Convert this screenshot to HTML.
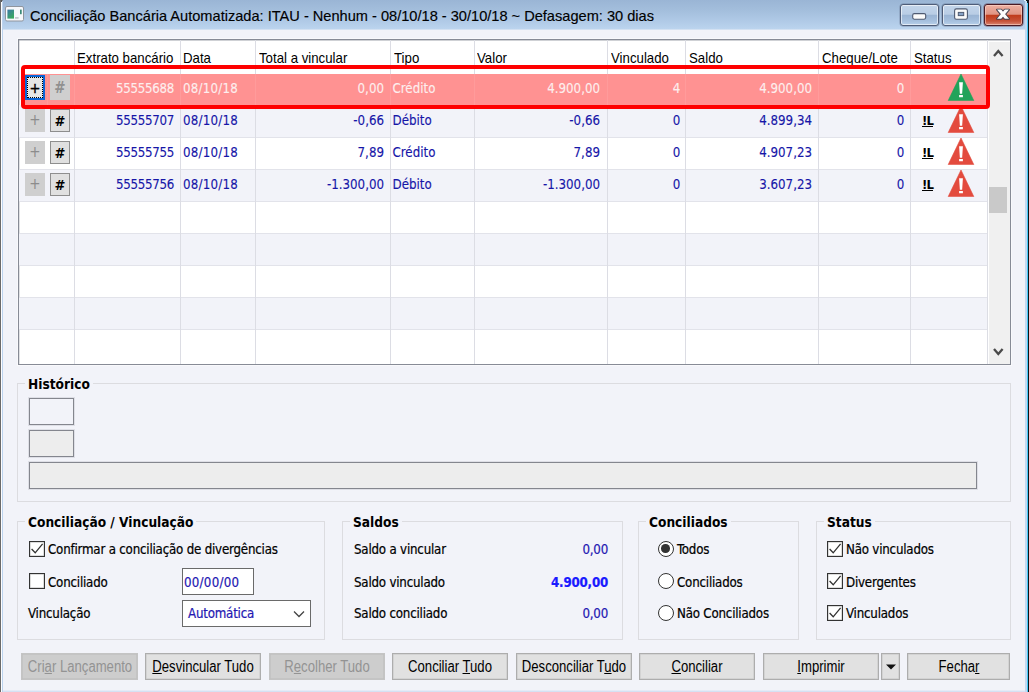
<!DOCTYPE html>
<html lang="pt-BR">
<head>
<meta charset="utf-8">
<title>Conciliação Bancária Automatizada</title>
<style>
*{box-sizing:border-box;margin:0;padding:0}
html,body{width:1029px;height:692px;overflow:hidden;background:#f2f3f9}
body{position:relative;font-family:"DejaVu Sans Condensed","Liberation Sans",sans-serif;font-size:13px;color:#000;line-height:16px}
.abs{position:absolute}
.t{position:absolute;white-space:nowrap;line-height:16px;height:16px;font-size:13.2px;letter-spacing:-0.2px;-webkit-text-stroke:0.2px currentColor}
/* window chrome */
#titlebar{left:0;top:0;width:1029px;height:29px;background:linear-gradient(#9ab5d5 0%,#a3bedc 35%,#afc9e6 70%,#bbd4ee 100%)}
#title{left:30px;top:6px;letter-spacing:0;-webkit-text-stroke:0.15px #000;font-family:"Liberation Sans",sans-serif;font-size:14.6px;line-height:20px;height:20px;color:#000}
.edgeL0{left:0;top:0;width:1px;height:692px;background:#6a6a6a}
.edgeL1{left:1px;top:0;width:1px;height:692px;background:#fdfdff}
.edgeL2{left:2px;top:0;width:1px;height:692px;background:#bcd3ee}
.edgeR0{left:1028px;top:0;width:1px;height:692px;background:#0a1418}
.edgeR1{left:1027px;top:0;width:1px;height:692px;background:#45c9f7}
.edgeR2{left:1025px;top:0;width:2px;height:692px;background:#c4d8f0}
.edgeB{left:2px;top:690px;width:1025px;height:2px;background:linear-gradient(#ecf0f9,#cddcf1)}
/* caption buttons */
.cap{position:absolute;top:4px;height:22px;border:1px solid #4f5d78;border-radius:3px;box-shadow:inset 0 0 0 1px rgba(255,255,255,.6),0 0 0 0.5px rgba(79,93,120,.5)}
.cap.mn,.cap.mx{background:linear-gradient(#c3d5ea 0%,#b9cde5 46%,#9bb5d4 52%,#a6c0de 80%,#b8d0ea 100%)}
.cap.cl{border-color:#4a1a24;box-shadow:inset 0 0 0 1px rgba(255,220,210,.55),0 0 0 0.5px rgba(74,26,36,.6);background:linear-gradient(#eeb0a2 0%,#e09584 46%,#c03c1c 52%,#c65238 80%,#d98672 100%)}
/* grid */
#grid{left:18px;top:39px;width:993px;height:326px;background:#fff;border:1px solid #878b96;box-shadow:inset 0 1px 0 rgba(135,139,150,.4),inset 1px 0 0 rgba(135,139,150,.25),0 0 0 1px rgba(255,255,255,.5)}
.row{position:absolute;left:0;width:969px;height:32px}
.lav{background:#f2f3f9}
.hl{position:absolute;left:0;width:969px;height:1px;background:#e2e3ea}
.vl{position:absolute;top:0;width:1px;height:324px;background:#dcdde4}
.hd{position:absolute;top:9px;white-space:nowrap;line-height:16px;font-family:"Liberation Sans",sans-serif;font-size:14.4px;transform:scaleX(.92);transform-origin:0 50%}
.c{position:absolute;white-space:nowrap;line-height:16px;color:#1616a8;font-size:13.2px;letter-spacing:-0.3px;-webkit-text-stroke:0.12px currentColor}
.r{text-align:right}
.w{color:#fdeeee}
.pb{position:absolute;width:20px;height:23px;background:#cfcfcf;color:#8c8c8c;text-align:center;font-size:15px;line-height:22px}
.hb{position:absolute;width:20px;height:23px;background:#e0e0e0;border:1px solid #8e8e8e;color:#000;text-align:center;font-weight:bold;font-size:14.5px;line-height:22px}
/* fieldsets */
.fs{position:absolute;border:1px solid #dcdce0}
.lg{position:absolute;top:-9px;left:8px;padding:0 3px;background:#f2f3f9;font-weight:bold;white-space:nowrap;line-height:16px;height:16px;font-size:13.6px}
.box{position:absolute;border:1px solid #84868e;box-shadow:0 0 0 1px rgba(132,134,142,.18)}
.cb{position:absolute;width:16px;height:16px;border:1px solid #333;background:#fff;margin-top:-1px;box-shadow:inset 0 0 0 0.5px rgba(51,51,51,.35)}
.rb{position:absolute;width:16px;height:16px;border:1.3px solid #333;background:#fff;border-radius:50%;margin-top:-1px}
.btn{position:absolute;top:653px;height:27px;background:#e1e1e1;border:1px solid #adadad;box-shadow:inset 0 0 0 0.5px rgba(173,173,173,.5);text-align:center;line-height:25px;white-space:nowrap;font-family:"Liberation Sans",sans-serif;font-size:16px}
.bt{position:absolute;left:50%;top:0;transform:translateX(-50%) scaleX(.82);transform-origin:50% 50%}
.btn.dis{background:#cdcdcd;border-color:#c4c4c4;color:#939393}
u{text-decoration:underline;text-underline-offset:1px}
</style>
</head>
<body>
<div id="titlebar" class="abs"></div><div class="abs" style="left:0;top:29px;width:1029px;height:1px;background:#d3e1f2"></div>
<div id="title" class="t">Conciliação Bancária Automatizada: ITAU - Nenhum - 08/10/18 - 30/10/18 ~ Defasagem: 30 dias</div>
<svg class="abs" style="left:5px;top:6px" width="19" height="16" viewBox="0 0 19 16">
<rect x="0.5" y="0.5" width="18" height="14.5" rx="1.5" fill="#f7f8fb" stroke="#8f959e"/>
<defs><linearGradient id="ig" x1="0" y1="0" x2="0.6" y2="1"><stop offset="0" stop-color="#3c78a8"/><stop offset="1" stop-color="#3aa860"/></linearGradient></defs>
<rect x="2.4" y="3.6" width="6.6" height="9" fill="url(#ig)"/>
<rect x="15" y="3.6" width="1.7" height="4.6" fill="#3a8a78"/>
<rect x="10" y="11.2" width="3.6" height="1.4" fill="#b8bcc4"/>
</svg>
<div class="cap mn" style="left:900px;width:39px"></div>
<div class="cap mx" style="left:942px;width:39px"></div>
<div class="cap cl" style="left:984px;width:39px"></div>
<svg class="abs" style="left:900px;top:4px" width="124" height="22" viewBox="0 0 124 22">
<rect x="12.7" y="9.6" width="13" height="5.6" rx="1.6" fill="#fbfbfb" stroke="#4f5b72" stroke-width="1.1"/>
<rect x="54.6" y="4.9" width="12.8" height="10.4" rx="1.8" fill="#fbfbfb" stroke="#4f5b72" stroke-width="1.1"/>
<rect x="58.3" y="8.4" width="5.4" height="3.2" fill="#86a2c6" stroke="#4f5b72" stroke-width="1"/>
<g stroke="#44414e" stroke-width="1.9" stroke-linejoin="round" fill="#44414e">
<path d="M97 5.6 h4.2 L109 14.8 h-4.2 Z"/><path d="M109 5.6 h-4.2 L97 14.8 h4.2 Z"/></g>
<g fill="#fdfdfd"><path d="M97 5.6 h4.2 L109 14.8 h-4.2 Z"/><path d="M109 5.6 h-4.2 L97 14.8 h4.2 Z"/></g>
</svg>
<div id="grid" class="abs">
<div class="row lav" style="top:65px"></div>
<div class="row lav" style="top:129px"></div>
<div class="row lav" style="top:193px"></div>
<div class="row lav" style="top:257px"></div>
<div class="hl" style="top:97px"></div>
<div class="hl" style="top:129px"></div>
<div class="hl" style="top:161px"></div>
<div class="hl" style="top:193px"></div>
<div class="hl" style="top:225px"></div>
<div class="hl" style="top:257px"></div>
<div class="hl" style="top:289px"></div>
<div class="hl" style="top:65px;left:969px;width:0"></div>
<div class="vl" style="left:55px"></div>
<div class="vl" style="left:161px"></div>
<div class="vl" style="left:236px"></div>
<div class="vl" style="left:371px"></div>
<div class="vl" style="left:455px"></div>
<div class="vl" style="left:588px"></div>
<div class="vl" style="left:666px"></div>
<div class="vl" style="left:799px"></div>
<div class="vl" style="left:891px"></div>
<div class="vl" style="left:968px"></div>
<div class="abs" style="left:970px;top:2px;width:21px;height:322px;background:#f0f0f0"></div>
<div class="abs" style="left:970px;top:146.5px;width:18px;height:26px;background:#c9c9c9"></div>
<svg class="abs" style="left:973px;top:7px" width="13" height="12" viewBox="0 0 13 12"><path d="M2 9 L6.3 4 L10.6 9" fill="none" stroke="#4a4a4a" stroke-width="2.3"/></svg>
<svg class="abs" style="left:973px;top:305px" width="13" height="12" viewBox="0 0 13 12"><path d="M2 4 L6.3 9 L10.6 4" fill="none" stroke="#4a4a4a" stroke-width="2.3"/></svg>
<div class="hd" style="left:58px;top:10px">Extrato bancário</div>
<div class="hd" style="left:164px;top:10px">Data</div>
<div class="hd" style="left:240px;top:10px">Total a vincular</div>
<div class="hd" style="left:375px;top:10px">Tipo</div>
<div class="hd" style="left:458px;top:10px">Valor</div>
<div class="hd" style="left:592px;top:10px">Vinculado</div>
<div class="hd" style="left:670px;top:10px">Saldo</div>
<div class="hd" style="left:803px;top:10px">Cheque/Lote</div>
<div class="hd" style="left:895px;top:10px">Status</div>
<div class="abs" style="left:5px;top:34px;width:964px;height:31px;background:#ff9292"></div>
<div class="abs" style="left:28px;top:34px;width:1px;height:31px;background:#ff9b9b"></div>
<div class="abs" style="left:55px;top:34px;width:1px;height:31px;background:#ff9b9b"></div>
<div class="abs" style="left:161px;top:34px;width:1px;height:31px;background:#ff9b9b"></div>
<div class="abs" style="left:236px;top:34px;width:1px;height:31px;background:#ff9b9b"></div>
<div class="abs" style="left:371px;top:34px;width:1px;height:31px;background:#ff9b9b"></div>
<div class="abs" style="left:455px;top:34px;width:1px;height:31px;background:#ff9b9b"></div>
<div class="abs" style="left:588px;top:34px;width:1px;height:31px;background:#ff9b9b"></div>
<div class="abs" style="left:666px;top:34px;width:1px;height:31px;background:#ff9b9b"></div>
<div class="abs" style="left:799px;top:34px;width:1px;height:31px;background:#ff9b9b"></div>
<div class="abs" style="left:891px;top:34px;width:1px;height:31px;background:#ff9b9b"></div>
<div class="c w r" style="left:35px;width:120px;top:41px">55555688</div>
<div class="c w" style="left:164px;top:41px;letter-spacing:0.2px">08/10/18</div>
<div class="c w r" style="left:245px;width:120px;top:41px;letter-spacing:0">0,00</div>
<div class="c w" style="left:373.5px;top:41px;letter-spacing:0">Crédito</div>
<div class="c w r" style="left:461px;width:120px;top:41px;letter-spacing:0">4.900,00</div>
<div class="c w r" style="left:541px;width:120px;top:41px">4</div>
<div class="c w r" style="left:673px;width:120px;top:41px;letter-spacing:0">4.900,00</div>
<div class="c w r" style="left:765px;width:120px;top:41px">0</div>
<div class="abs" style="left:6px;top:35px;width:20px;height:25px;background:#0b64d6"></div>
<div class="abs" style="left:8px;top:37px;width:16px;height:21px;background:#e6e6e6;border:1px dotted #000;text-align:center;font-size:14.5px;line-height:20px;font-weight:normal;-webkit-text-stroke:0.4px #000;color:#000">+</div>
<div class="pb" style="left:31px;top:35px;height:25px;line-height:27px;font-size:15px;font-weight:bold;color:#909090;background:#cfcfcf">#</div>
<svg class="abs" style="left:928px;top:34.3px" width="28" height="27" viewBox="0 0 28 27"><path d="M14 0 L26.8 26.6 L1.2 26.6 Z" fill="#21a35a" stroke="#21a35a" stroke-width="0.6" stroke-linejoin="round"/><path d="M12.1 8.2 h3.8 l-0.75 11.6 h-2.3 Z M12.1 21 h3.8 v2.3 h-3.8 Z" fill="#fff"/></svg>
<div class="c r" style="left:35px;width:120px;top:73px">55555707</div>
<div class="c" style="left:164px;top:73px;letter-spacing:0.2px">08/10/18</div>
<div class="c r" style="left:245px;width:120px;top:73px;letter-spacing:0">-0,66</div>
<div class="c" style="left:373.5px;top:73px;letter-spacing:0">Débito</div>
<div class="c r" style="left:461px;width:120px;top:73px;letter-spacing:0">-0,66</div>
<div class="c r" style="left:541px;width:120px;top:73px">0</div>
<div class="c r" style="left:673px;width:120px;top:73px;letter-spacing:0">4.899,34</div>
<div class="c r" style="left:765px;width:120px;top:73px">0</div>
<div class="pb" style="left:6px;top:69px">+</div>
<div class="hb" style="left:31px;top:69px">#</div>
<div class="abs" style="left:903px;top:73px;font-weight:bold;font-size:13px;line-height:16px;color:#000;text-decoration:underline;letter-spacing:-0.9px">!L</div>
<svg class="abs" style="left:928px;top:66.3px" width="28" height="27" viewBox="0 0 28 27"><path d="M14 0 L26.8 26.6 L1.2 26.6 Z" fill="#e34b3e" stroke="#e34b3e" stroke-width="0.6" stroke-linejoin="round"/><path d="M12.1 8.2 h3.8 l-0.75 11.6 h-2.3 Z M12.1 21 h3.8 v2.3 h-3.8 Z" fill="#fff"/></svg>
<div class="c r" style="left:35px;width:120px;top:105px">55555755</div>
<div class="c" style="left:164px;top:105px;letter-spacing:0.2px">08/10/18</div>
<div class="c r" style="left:245px;width:120px;top:105px;letter-spacing:0">7,89</div>
<div class="c" style="left:373.5px;top:105px;letter-spacing:0">Crédito</div>
<div class="c r" style="left:461px;width:120px;top:105px;letter-spacing:0">7,89</div>
<div class="c r" style="left:541px;width:120px;top:105px">0</div>
<div class="c r" style="left:673px;width:120px;top:105px;letter-spacing:0">4.907,23</div>
<div class="c r" style="left:765px;width:120px;top:105px">0</div>
<div class="pb" style="left:6px;top:101px">+</div>
<div class="hb" style="left:31px;top:101px">#</div>
<div class="abs" style="left:903px;top:105px;font-weight:bold;font-size:13px;line-height:16px;color:#000;text-decoration:underline;letter-spacing:-0.9px">!L</div>
<svg class="abs" style="left:928px;top:98.3px" width="28" height="27" viewBox="0 0 28 27"><path d="M14 0 L26.8 26.6 L1.2 26.6 Z" fill="#e34b3e" stroke="#e34b3e" stroke-width="0.6" stroke-linejoin="round"/><path d="M12.1 8.2 h3.8 l-0.75 11.6 h-2.3 Z M12.1 21 h3.8 v2.3 h-3.8 Z" fill="#fff"/></svg>
<div class="c r" style="left:35px;width:120px;top:137px">55555756</div>
<div class="c" style="left:164px;top:137px;letter-spacing:0.2px">08/10/18</div>
<div class="c r" style="left:245px;width:120px;top:137px;letter-spacing:0">-1.300,00</div>
<div class="c" style="left:373.5px;top:137px;letter-spacing:0">Débito</div>
<div class="c r" style="left:461px;width:120px;top:137px;letter-spacing:0">-1.300,00</div>
<div class="c r" style="left:541px;width:120px;top:137px">0</div>
<div class="c r" style="left:673px;width:120px;top:137px;letter-spacing:0">3.607,23</div>
<div class="c r" style="left:765px;width:120px;top:137px">0</div>
<div class="pb" style="left:6px;top:133px">+</div>
<div class="hb" style="left:31px;top:133px">#</div>
<div class="abs" style="left:903px;top:137px;font-weight:bold;font-size:13px;line-height:16px;color:#000;text-decoration:underline;letter-spacing:-0.9px">!L</div>
<svg class="abs" style="left:928px;top:130.3px" width="28" height="27" viewBox="0 0 28 27"><path d="M14 0 L26.8 26.6 L1.2 26.6 Z" fill="#e34b3e" stroke="#e34b3e" stroke-width="0.6" stroke-linejoin="round"/><path d="M12.1 8.2 h3.8 l-0.75 11.6 h-2.3 Z M12.1 21 h3.8 v2.3 h-3.8 Z" fill="#fff"/></svg>
<div class="abs" style="left:2px;top:25px;width:969px;height:44px;border:4px solid #fe0000;border-radius:4px"></div>
</div>
<div class="fs" style="left:17px;top:383px;width:994px;height:119px"><div class="lg" style="top:-8px;left:7px">Histórico</div></div>
<div class="box" style="left:29px;top:398px;width:45px;height:27px"></div>
<div class="box" style="left:29px;top:430px;width:45px;height:27px;background:#ededed"></div>
<div class="box" style="left:29px;top:462px;width:948px;height:27px;background:#ededed"></div>
<div class="fs" style="left:17px;top:521px;width:308px;height:119px"><div class="lg" style="top:-8px;left:7px">Conciliação / Vinculação</div></div>
<div class="fs" style="left:342px;top:521px;width:281px;height:119px"><div class="lg" style="top:-8px;left:7px">Saldos</div></div>
<div class="fs" style="left:638px;top:521px;width:161px;height:119px"><div class="lg" style="top:-8px;left:7px">Conciliados</div></div>
<div class="fs" style="left:816px;top:521px;width:195px;height:119px"><div class="lg" style="top:-8px;left:7px">Status</div></div>
<div class="cb" style="left:29px;top:542px"><svg width="14" height="14" viewBox="0 0 14 14" style="position:absolute;left:0;top:0"><path d="M1.6 7 L5.2 10.8 L12.6 1.8" fill="none" stroke="#333" stroke-width="1.3"/></svg></div>
<div class="t" style="left:48px;top:542px">Confirmar a conciliação de divergências</div>
<div class="cb" style="left:29px;top:574px"></div>
<div class="t" style="left:48px;top:575px">Conciliado</div>
<div class="abs" style="left:182px;top:568px;width:72px;height:27px;border:1px solid #6a6a6a;background:#fff"></div>
<div class="t" style="left:184px;top:575px;color:#2418b2;letter-spacing:0.25px">00/00/00</div>
<div class="t" style="left:28px;top:606px">Vinculação</div>
<div class="abs" style="left:182px;top:600px;width:129px;height:27px;border:1px solid #6a6a6a;background:#fff"></div>
<div class="t" style="left:188px;top:606px;color:#2418b2">Automática</div>
<svg class="abs" style="left:292px;top:609px" width="14" height="10" viewBox="0 0 14 10"><path d="M2 2.5 L7 7.5 L12 2.5" fill="none" stroke="#444" stroke-width="1.3"/></svg>
<div class="t" style="left:354px;top:542px">Saldo a vincular</div>
<div class="t r" style="left:488px;width:120px;top:542px;color:#2418b2">0,00</div>
<div class="t" style="left:354px;top:575px">Saldo vinculado</div>
<div class="t r" style="left:488px;width:120px;top:575px;font-weight:bold;color:#1a1aff">4.900,00</div>
<div class="t" style="left:354px;top:606px">Saldo conciliado</div>
<div class="t r" style="left:488px;width:120px;top:606px;color:#2418b2">0,00</div>
<div class="rb" style="left:658px;top:542px"><div style="position:absolute;left:2.4px;top:2.4px;width:8.6px;height:8.6px;border-radius:50%;background:#333"></div></div>
<div class="t" style="left:677px;top:542px">Todos</div>
<div class="rb" style="left:658px;top:574px"></div>
<div class="t" style="left:677px;top:575px">Conciliados</div>
<div class="rb" style="left:658px;top:606px"></div>
<div class="t" style="left:677px;top:606px">Não Conciliados</div>
<div class="cb" style="left:827px;top:542px"><svg width="14" height="14" viewBox="0 0 14 14" style="position:absolute;left:0;top:0"><path d="M1.6 7 L5.2 10.8 L12.6 1.8" fill="none" stroke="#333" stroke-width="1.3"/></svg></div>
<div class="t" style="left:846px;top:542px">Não vinculados</div>
<div class="cb" style="left:827px;top:574px"><svg width="14" height="14" viewBox="0 0 14 14" style="position:absolute;left:0;top:0"><path d="M1.6 7 L5.2 10.8 L12.6 1.8" fill="none" stroke="#333" stroke-width="1.3"/></svg></div>
<div class="t" style="left:846px;top:575px">Divergentes</div>
<div class="cb" style="left:827px;top:606px"><svg width="14" height="14" viewBox="0 0 14 14" style="position:absolute;left:0;top:0"><path d="M1.6 7 L5.2 10.8 L12.6 1.8" fill="none" stroke="#333" stroke-width="1.3"/></svg></div>
<div class="t" style="left:846px;top:606px">Vinculados</div>
<div class="btn dis" style="left:21px;width:117px"><span class="bt">Cri<u>a</u>r Lançamento</span></div>
<div class="btn" style="left:145px;width:116px"><span class="bt"><u>D</u>esvincular Tudo</span></div>
<div class="btn dis" style="left:269px;width:116px"><span class="bt">R<u>e</u>colher Tudo</span></div>
<div class="btn" style="left:392px;width:116px"><span class="bt">Conciliar <u>T</u>udo</span></div>
<div class="btn" style="left:516px;width:116px"><span class="bt">Desconciliar T<u>u</u>do</span></div>
<div class="btn" style="left:639px;width:116px"><span class="bt"><u>C</u>onciliar</span></div>
<div class="btn" style="left:763px;width:116px"><span class="bt"><u>I</u>mprimir</span></div>
<div class="btn" style="left:881px;width:19px"></div>
<div class="btn" style="left:907px;width:103px"><span class="bt">Fecha<u>r</u></span></div>
<svg class="abs" style="left:885px;top:663px" width="12" height="8" viewBox="0 0 12 8"><path d="M1 1.5 H11 L6 6.5 Z" fill="#111"/></svg>
<div class="abs edgeB"></div>
<div class="abs edgeL0"></div><div class="abs edgeL1"></div><div class="abs edgeL2"></div>
<div class="abs edgeR2"></div><div class="abs edgeR1"></div><div class="abs edgeR0"></div>
<div class="abs" style="left:1px;top:0;width:1px;height:2px;background:#565656"></div><div class="abs" style="left:2px;top:0;width:1px;height:1px;background:#7e8894"></div>
<div class="abs" style="left:1024px;top:0;width:2px;height:1px;background:#dff3fb"></div><div class="abs" style="left:1026px;top:0;width:3px;height:1px;background:#10181c"></div><div class="abs" style="left:1027px;top:1px;width:2px;height:2px;background:#10181c"></div><div class="abs" style="left:1026px;top:1px;width:1px;height:2px;background:#bfeafa"></div>
</body>
</html>
